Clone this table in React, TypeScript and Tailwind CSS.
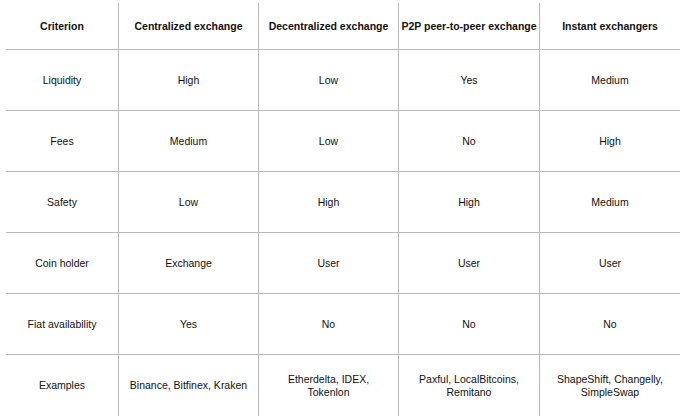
import React from 'react';

const headers = [
  'Criterion',
  'Centralized exchange',
  'Decentralized exchange',
  'P2P peer-to-peer exchange',
  'Instant exchangers',
];

const rows: React.ReactNode[][] = [
  ['Liquidity', 'High', 'Low', 'Yes', 'Medium'],
  ['Fees', 'Medium', 'Low', 'No', 'High'],
  ['Safety', 'Low', 'High', 'High', 'Medium'],
  ['Coin holder', 'Exchange', 'User', 'User', 'User'],
  ['Fiat availability', 'Yes', 'No', 'No', 'No'],
  [
    'Examples',
    'Binance, Bitfinex, Kraken',
    <>Etherdelta, IDEX,<br />Tokenlon</>,
    <>Paxful, LocalBitcoins,<br />Remitano</>,
    <>ShapeShift, Changelly,<br />SimpleSwap</>,
  ],
];

const Cell = ({
  children,
  col,
  last,
  bold,
}: {
  children: React.ReactNode;
  col: number;
  last: boolean;
  bold?: boolean;
}) => {
  const borders = [
    last ? '' : 'border-b border-[#b8b8b8]',
    col > 0 ? 'border-l border-[#b8b8b8]' : '',
  ].join(' ');
  return (
    <div
      className={`flex items-center justify-center text-center leading-[13px] ${borders} ${
        bold ? 'font-bold whitespace-nowrap' : 'px-1'
      }`}
    >
      <span>{children}</span>
    </div>
  );
};

const App = () => {
  return (
    <div className="min-h-screen bg-white pt-[3px] pl-[6px] text-[10.5px] text-[#111] font-['Liberation_Sans',Arial,sans-serif]">
      <div className="w-[674px] grid grid-cols-[112px_140px_140px_141px_141px] grid-rows-[47px_repeat(6,61px)]">
        {headers.map((h, i) => (
          <Cell key={h} col={i} last={false} bold>
            {h}
          </Cell>
        ))}
        {rows.map((row, r) =>
          row.map((cell, c) => (
            <Cell key={`${r}-${c}`} col={c} last={r === rows.length - 1}>
              {cell}
            </Cell>
          ))
        )}
      </div>
    </div>
  );
};

export default App;
